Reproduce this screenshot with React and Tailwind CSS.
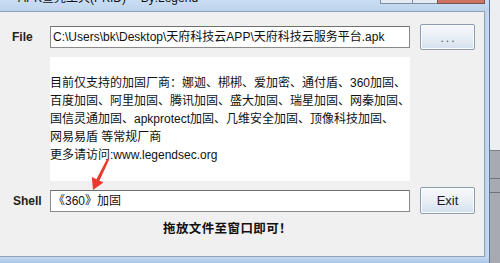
import React from "react";

const FONT = { fontFamily: '"Liberation Sans", "Noto Sans CJK SC", sans-serif' };

function Btn({ children, className = "" }) {
  return (
    <div
      className={
        "w-[55px] ml-[10px] flex items-center justify-center rounded-[2px] border border-[#8b9cb3] bg-linear-to-b from-[#f6f8fb] via-[#eaeff5] to-[#d4e0ee] shadow-[inset_0_0_0_1px_#fbfcfe] " +
        className
      }
    >
      {children}
    </div>
  );
}

export default function App() {
  return (
    <div className="relative w-[500px] h-[263px] overflow-hidden flex bg-[#e4e7eb]" style={FONT}>
      {/* window */}
      <div className="w-[490px] h-[263px] flex flex-col border-r border-[#60778f] bg-[#c2d7ee]">
        {/* title bar */}
        <div className="h-[11px] flex bg-linear-to-b from-[#c9def3] to-[#bdd4ec] overflow-hidden">
          <div className="pl-[18px] -mt-[9px] text-[12px] leading-[14px] text-[#111] whitespace-nowrap">
            APK查壳工具(PKID) -- By:Legend
          </div>
          <div className="ml-auto flex items-start mr-[4px]">
            <div className="w-[32px] h-[4px] bg-[#e4ebf3] border-b border-l border-[#7d8ea3]" />
            <div className="w-[25px] h-[4px] bg-[#e4ebf3] border-b border-l border-[#7d8ea3]" />
            <div className="w-[48px] h-[4px] bg-[#cf7463] border-b border-l border-r border-[#7d5550]" />
          </div>
        </div>
        {/* middle */}
        <div className="flex flex-1">
          <div className="w-[485px] h-[246px] bg-[#f0f0f0] border-t border-r border-b border-[#8ea2b8] flex flex-col">
            {/* File row */}
            <div className="mt-[12px] h-[26px] flex items-center">
              <div className="w-[50px] pl-[12px] text-[12px] font-bold text-[#222]">File</div>
              <div className="w-[360px] h-[22px] bg-white border border-[#8a8a8a] border-t-[#707070] flex items-center pl-[2px] text-[12px] text-[#111] whitespace-nowrap overflow-hidden">
                C:\Users\bk\Desktop\天府科技云APP\天府科技云服务平台.apk
              </div>
              <Btn className="h-[26px]">
                <span className="text-[12px] text-[#555] tracking-[2px] pl-[2px] mt-[2px]">...</span>
              </Btn>
            </div>
            {/* text area */}
            <div className="mt-[7px] ml-[50px] w-[360px] h-[124px] bg-white pt-[17px] text-[12px] leading-[18px] text-[#111] whitespace-nowrap">
              <div>目前仅支持的加固厂商：娜迦、梆梆、爱加密、通付盾、360加固、</div>
              <div>百度加固、阿里加固、腾讯加固、盛大加固、瑞星加固、网秦加固、</div>
              <div>国信灵通加固、apkprotect加固、几维安全加固、顶像科技加固、</div>
              <div>网易易盾 等常规厂商</div>
              <div>更多请访问:www.legendsec.org</div>
            </div>
            {/* Shell row */}
            <div className="mt-[6px] h-[27px] flex items-center">
              <div className="w-[50px] pl-[13px] text-[12px] font-bold text-[#222]">Shell</div>
              <div className="w-[360px] h-[22px] bg-white border border-[#8a8a8a] border-t-[#707070] flex items-center pl-[2px] text-[12px] text-[#111] whitespace-nowrap">
                《360》加固
              </div>
              <Btn className="h-[27px]">
                <span className="text-[13px] text-[#1a1a1a]">Exit</span>
              </Btn>
            </div>
            {/* hint */}
            <div className="mt-[7px] pl-[163px] text-[12.5px] leading-[16px] font-bold tracking-[0.4px] text-[#111] whitespace-nowrap">
              拖放文件至窗口即可！
            </div>
          </div>
          <div className="flex-1 bg-linear-to-r from-[#b9d0ea] to-[#c9dcf1]" />
        </div>
        {/* bottom frame */}
        <div className="h-[6px] bg-linear-to-b from-[#c6dbf1] to-[#a9c6e6]" />
      </div>
      {/* background at right */}
      <div className="flex-1 flex flex-col">
        <div className="h-[150px] bg-[#eceef1]" />
        <div className="flex-1 bg-[#a7abb1] border-t border-[#7c8086] flex flex-col">
          <div className="h-[28px] border-b border-[#6f737a]" />
          <div className="h-[14px] border-b border-[#6f737a]" />
        </div>
      </div>
      {/* red arrow */}
      <svg className="absolute inset-0 pointer-events-none" width="500" height="263" viewBox="0 0 500 263">
        <polygon points="107.2,158.6 109.2,159.4 99.3,181 96.3,179.6" fill="#e83a2e" />
        <polygon points="93,190 91.8,177 103.4,182.6" fill="#e83a2e" />
      </svg>
    </div>
  );
}
